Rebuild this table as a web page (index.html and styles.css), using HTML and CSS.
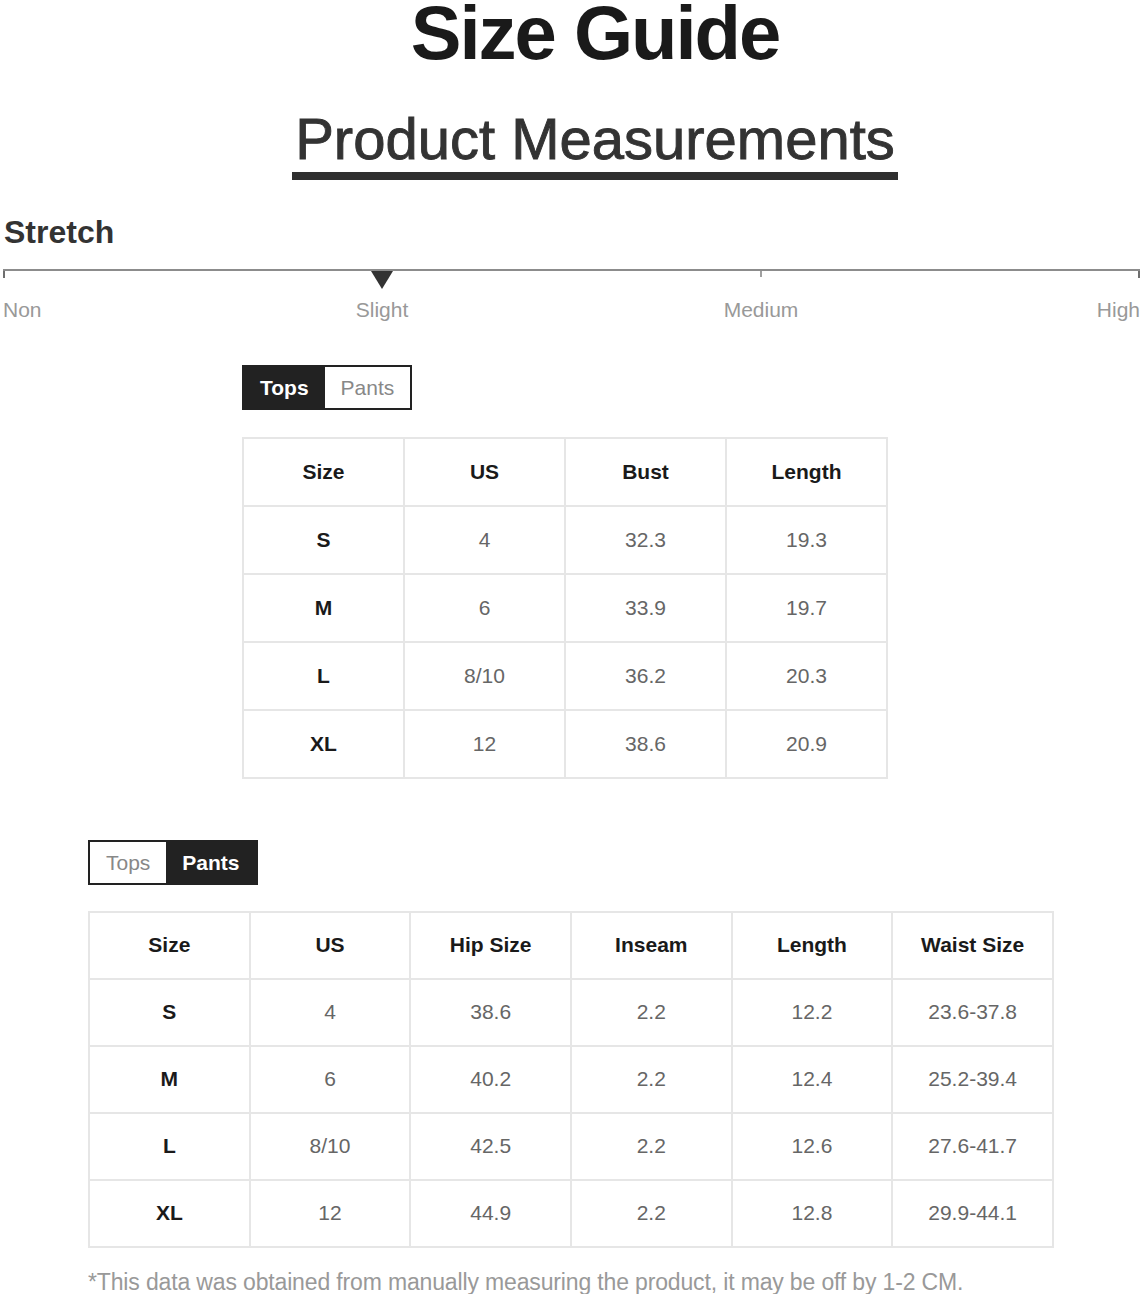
FILE: index.html
```html
<!DOCTYPE html>
<html lang="en">
<head>
    <meta charset="UTF-8">
    <title>Size Guide</title>
    <link rel="stylesheet" href="styles.css">
</head>
<body>
    <header class="guide-header">
        <h1 class="guide-title">Size Guide</h1>
        <h2 class="guide-subtitle">Product Measurements</h2>
    </header>

    <section class="stretch">
        <h3 class="stretch-title">Stretch</h3>
        <div class="scale">
            <div class="mark mark-start"><span class="tick"></span></div>
            <div class="mark"><span class="pointer"></span></div>
            <div class="mark"><span class="tick tick-mid"></span></div>
            <div class="mark mark-end"><span class="tick"></span></div>
        </div>
        <div class="scale-labels">
            <div class="mark mark-start"><span>Non</span></div>
            <div class="mark"><span>Slight</span></div>
            <div class="mark"><span>Medium</span></div>
            <div class="mark mark-end"><span>High</span></div>
        </div>
    </section>

    <section class="chart chart-tops">
        <div class="tabs">
            <span class="tab active">Tops</span>
            <span class="tab">Pants</span>
        </div>
        <table class="size-table">
            <thead>
                <tr><th>Size</th><th>US</th><th>Bust</th><th>Length</th></tr>
            </thead>
            <tbody>
                <tr><th>S</th><td>4</td><td>32.3</td><td>19.3</td></tr>
                <tr><th>M</th><td>6</td><td>33.9</td><td>19.7</td></tr>
                <tr><th>L</th><td>8/10</td><td>36.2</td><td>20.3</td></tr>
                <tr><th>XL</th><td>12</td><td>38.6</td><td>20.9</td></tr>
            </tbody>
        </table>
    </section>

    <section class="chart chart-pants">
        <div class="tabs">
            <span class="tab">Tops</span>
            <span class="tab active">Pants</span>
        </div>
        <table class="size-table">
            <thead>
                <tr><th>Size</th><th>US</th><th>Hip Size</th><th>Inseam</th><th>Length</th><th>Waist Size</th></tr>
            </thead>
            <tbody>
                <tr><th>S</th><td>4</td><td>38.6</td><td>2.2</td><td>12.2</td><td>23.6-37.8</td></tr>
                <tr><th>M</th><td>6</td><td>40.2</td><td>2.2</td><td>12.4</td><td>25.2-39.4</td></tr>
                <tr><th>L</th><td>8/10</td><td>42.5</td><td>2.2</td><td>12.6</td><td>27.6-41.7</td></tr>
                <tr><th>XL</th><td>12</td><td>44.9</td><td>2.2</td><td>12.8</td><td>29.9-44.1</td></tr>
            </tbody>
        </table>
        <p class="note">*This data was obtained from manually measuring the product, it may be off by 1-2 CM.</p>
    </section>
</body>
</html>
```

FILE: styles.css
```css
:root {
    --ink: #1a1a1a;
    --dark: #333333;
    --muted: #999999;
    --value: #666666;
    --rule: #e6e6e6;
}

* {
    box-sizing: border-box;
    margin: 0;
    padding: 0;
}

body {
    font-family: "Liberation Sans", Arial, sans-serif;
    background-color: #ffffff;
    color: var(--dark);
    width: 1144px;
}

/* header */
.guide-header {
    text-align: center;
    padding-left: 46px;
    padding-top: 3px;
}

.guide-title {
    font-size: 76px;
    font-weight: 700;
    letter-spacing: -2px;
    line-height: 0.8;
    color: var(--ink);
}

.guide-subtitle {
    display: inline-block;
    margin-top: 46px;
    font-size: 58px;
    font-weight: 400;
    line-height: 1;
    color: var(--dark);
    -webkit-text-stroke: 0.9px var(--dark);
    padding: 0 3px 4px;
    border-bottom: 8px solid #2f2f2f;
}

/* stretch scale */
.stretch {
    margin: 36px 4px 0 3px;
}

.stretch-title {
    font-size: 32px;
    font-weight: 700;
    line-height: 1;
    color: var(--dark);
    margin-left: 1px;
}

.scale {
    margin-top: 21px;
    border-top: 2px solid #8c8c8c;
    display: flex;
    justify-content: space-between;
    height: 20px;
}

.mark {
    width: 0;
    display: flex;
    justify-content: center;
    white-space: nowrap;
}

.mark-start {
    justify-content: flex-start;
}

.mark-end {
    justify-content: flex-end;
}

.tick {
    display: block;
    flex: none;
    width: 2px;
    height: 7px;
    background-color: #6e6e6e;
}

.tick-mid {
    height: 6px;
    background-color: #a0a0a0;
}

.pointer {
    display: block;
    flex: none;
    width: 0;
    height: 0;
    border-left: 11px solid transparent;
    border-right: 11px solid transparent;
    border-top: 18px solid #333333;
}

.scale-labels {
    display: flex;
    justify-content: space-between;
    margin-top: 10px;
    font-size: 21px;
    line-height: 1;
    color: var(--muted);
}

/* charts */
.chart-tops {
    margin: 45px 0 0 242px;
    width: 646px;
}

.chart-pants {
    margin: 61px 0 0 88px;
    width: 966px;
}

.tabs {
    display: inline-flex;
    border: 2px solid #222222;
    font-size: 21px;
    line-height: 41px;
}

.tab {
    padding: 0 16px;
    color: #888888;
}

.tab.active {
    background-color: #222222;
    color: #ffffff;
    font-weight: 700;
}

.size-table {
    margin-top: 27px;
    width: 100%;
    table-layout: fixed;
    border-collapse: collapse;
    font-size: 21px;
    text-align: center;
}

.size-table th,
.size-table td {
    border: 2px solid var(--rule);
    height: 68px;
}

.size-table th {
    color: var(--ink);
    font-weight: 700;
}

.size-table td {
    color: var(--value);
}

.chart-pants .size-table {
    margin-top: 26px;
}

.chart-pants .size-table th,
.chart-pants .size-table td {
    height: 67px;
}

.note {
    margin-top: 23px;
    font-size: 23px;
    letter-spacing: -0.15px;
    color: var(--muted);
    line-height: 1;
}
```
